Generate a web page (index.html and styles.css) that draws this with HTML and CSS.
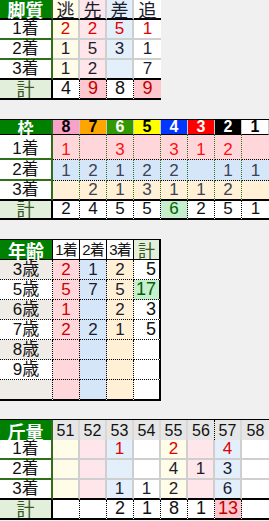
FILE: index.html
```html
<!DOCTYPE html>
<html lang="ja">
<head>
<meta charset="utf-8">
<link rel="stylesheet" href="styles.css">
</head>
<body>
<div class="t t1">
  <div class="c hl">脚質</div>
  <div class="c h y">逃</div><div class="c h p">先</div><div class="c h b">差</div><div class="c h w last">追</div>
  <div class="c lb">1着</div>
  <div class="c d y red">2</div><div class="c d p red">2</div><div class="c d b red">5</div><div class="c d w red last">1</div>
  <div class="c lb">2着</div>
  <div class="c d y">1</div><div class="c d p">5</div><div class="c d b">3</div><div class="c d w last">1</div>
  <div class="c lb rb">3着</div>
  <div class="c d y rb">1</div><div class="c d p rb">2</div><div class="c d b rb"></div><div class="c d w rb last">7</div>
  <div class="c tl">計</div>
  <div class="c s">4</div><div class="c s bad">9</div><div class="c s">8</div><div class="c s bad last">9</div>
</div>

<div class="t t2">
  <div class="c hl">枠</div>
  <div class="c h f8">8</div><div class="c h f7">7</div><div class="c h f6">6</div><div class="c h f5">5</div>
  <div class="c h f4">4</div><div class="c h f3">3</div><div class="c h f2">2</div><div class="c h f1">1</div>
  <div class="c lb">1着</div>
  <div class="c d r1">1</div><div class="c d r1"></div><div class="c d r1">3</div><div class="c d r1"></div>
  <div class="c d r1">3</div><div class="c d r1">1</div><div class="c d r1">2</div><div class="c d r1 last"></div>
  <div class="c lb">2着</div>
  <div class="c d r2">1</div><div class="c d r2">2</div><div class="c d r2">1</div><div class="c d r2">2</div>
  <div class="c d r2">2</div><div class="c d r2"></div><div class="c d r2">1</div><div class="c d r2 last">1</div>
  <div class="c lb rb">3着</div>
  <div class="c d r3"></div><div class="c d r3">2</div><div class="c d r3">1</div><div class="c d r3">3</div>
  <div class="c d r3">1</div><div class="c d r3">1</div><div class="c d r3">2</div><div class="c d r3 last"></div>
  <div class="c tl">計</div>
  <div class="c s">2</div><div class="c s">4</div><div class="c s">5</div><div class="c s">5</div>
  <div class="c s good">6</div><div class="c s">2</div><div class="c s">5</div><div class="c s last">1</div>
</div>

<div class="t t3">
  <div class="c hl">年齢</div>
  <div class="c h">1着</div><div class="c h">2着</div><div class="c h">3着</div><div class="c h ht last">計</div>
  <div class="c lb alt">3歳</div>
  <div class="c d k1">2</div><div class="c d k2">1</div><div class="c d k3">2</div><div class="c d k4 last">5</div>
  <div class="c lb">5歳</div>
  <div class="c d k1">5</div><div class="c d k2">7</div><div class="c d k3">5</div><div class="c d k4 good last">17</div>
  <div class="c lb alt">6歳</div>
  <div class="c d k1">1</div><div class="c d k2"></div><div class="c d k3">2</div><div class="c d k4 last">3</div>
  <div class="c lb">7歳</div>
  <div class="c d k1">2</div><div class="c d k2">2</div><div class="c d k3">1</div><div class="c d k4 last">5</div>
  <div class="c lb alt">8歳</div>
  <div class="c d k1"></div><div class="c d k2"></div><div class="c d k3"></div><div class="c d k4 last"></div>
  <div class="c lb">9歳</div>
  <div class="c d k1"></div><div class="c d k2"></div><div class="c d k3"></div><div class="c d k4 last"></div>
  <div class="c lb alt end"></div>
  <div class="c d k1 end"></div><div class="c d k2 end"></div><div class="c d k3 end"></div><div class="c d k4 end last"></div>
</div>

<div class="t t4">
  <div class="c hl">斤量</div>
  <div class="c h">51</div><div class="c h">52</div><div class="c h">53</div><div class="c h">54</div>
  <div class="c h">55</div><div class="c h dl">56</div><div class="c h">57</div><div class="c h last">58</div>
  <div class="c lb">1着</div>
  <div class="c d y"></div><div class="c d p"></div><div class="c d b red">1</div><div class="c d w"></div>
  <div class="c d y red">2</div><div class="c d p"></div><div class="c d b red">4</div><div class="c d w last"></div>
  <div class="c lb">2着</div>
  <div class="c d y"></div><div class="c d p"></div><div class="c d b"></div><div class="c d w"></div>
  <div class="c d y">4</div><div class="c d p">1</div><div class="c d b">3</div><div class="c d w last"></div>
  <div class="c lb rb">3着</div>
  <div class="c d y rb"></div><div class="c d p rb"></div><div class="c d b rb">1</div><div class="c d w rb">1</div>
  <div class="c d y rb">2</div><div class="c d p rb"></div><div class="c d b rb">6</div><div class="c d w rb last"></div>
  <div class="c tl">計</div>
  <div class="c s"></div><div class="c s"></div><div class="c s">2</div><div class="c s">1</div>
  <div class="c s">8</div><div class="c s">1</div><div class="c s bad">13</div><div class="c s last"></div>
</div>
</body>
</html>
```

FILE: styles.css
```css
html, body {
  margin: 0;
  padding: 0;
  background: #f0f0f0;
}
body {
  width: 269px;
  height: 521px;
  overflow: hidden;
  font-family: "Liberation Sans", "Noto Sans CJK JP", sans-serif;
  color: #1c1c30;
}
.t {
  display: grid;
  background: #fff;
  width: max-content;
}
.c {
  box-sizing: border-box;
  display: flex;
  align-items: flex-end;
  justify-content: center;
  white-space: nowrap;
  font-size: 17px;
  line-height: 17px;
  padding-bottom: 1px;
}

/* common pieces */
.hl {
  background: #008000;
  color: #fff;
  font-family: "Noto Sans CJK JP", sans-serif;
  font-weight: bold;
  font-size: 18px;
  line-height: 18px;
  padding-bottom: 0;
}
.lb {
  font-family: "Liberation Sans", "Noto Sans CJK JP", sans-serif;
  font-size: 17px;
  color: #111;
}
.tl {
  background: #e2efda;
  color: #375623;
  font-family: "Noto Sans CJK JP", sans-serif;
  font-size: 18px;
}
.red { color: #e00000; }
.y { background: #fffde8; }
.p { background: #ffe6ea; }
.b { background: #e3effb; }
.w { background: #fff; }
.s {
  background: #fff;
  color: #111;
  font-size: 18px;
  border-right: 1px dotted #000;
}
.bad { background: #ffc7ce; color: #c00000; }
.good { background: #c6efce; color: #006100; }

/* table 1 */
.t1 {
  grid-template-columns: 53px repeat(4, 27px);
  grid-auto-rows: 20px;
}
.t1 .c { border-right: 2px solid #cfcfcf; border-bottom: 2px solid #cfcfcf; }
.t1 .hl { border-right: 2px solid #2f6f1a; border-bottom: 2px solid #000; }
.t1 .h { border-bottom: 2px solid #000; font-family: "Noto Sans CJK JP", sans-serif; font-size: 18px; line-height: 18px; padding-bottom: 0; }
.t1 .lb { border-right: 2px solid #2f6f1a; border-bottom: 2px solid #2f6f1a; }
.t1 .rb { border-bottom: 2px solid #000; }
.t1 .tl { border-right: 2px solid #000; border-bottom: 2px solid #000; }
.t1 .s { border-right: 1px dotted #000; border-bottom: 2px solid #000; }
.t1 .last { border-right: none; }

/* table 2 */
.t2 {
  margin-top: 19px;
  border-top: 1px solid #000;
  grid-template-columns: 53px repeat(8, 27px);
  grid-template-rows: 15px 25px 21px 20px 19px;
}
.t2 .hl { border-right: 2px solid #2f6f1a; border-bottom: 1px solid #000; font-size: 16px; line-height: 14px; }
.t2 .h {
  border-right: 1px solid #c8c8c8;
  border-bottom: 1px solid #000;
  font-weight: bold;
  font-size: 16px;
  line-height: 14px;
  padding-bottom: 0;
}
.f8 { background: #f9a2c8; color: #000; }
.f7 { background: #ffa500; color: #000; }
.f6 { background: #339900; color: #fff; }
.f5 { background: #ffff00; color: #000; }
.f4 { background: #0036ff; color: #fff; }
.f3 { background: #ff0000; color: #fff; }
.f2 { background: #000; color: #fff; }
.f1 { background: #fff; color: #000; }
.t2 .lb { border-right: 2px solid #2f6f1a; border-bottom: 2px solid #2f6f1a; }
.t2 .lb.rb { border-bottom: 2px solid #000; }
.t2 .d { border-right: 1px dotted #2f6f1a; border-bottom: 1px dotted #000; color: #3c4356; }
.t2 .r1 { background: #ffd7db; color: #ff1010; }
.t2 .r2 { background: #d6e6f9; }
.t2 .r3 { background: #fff0d6; border-bottom: 2px solid #000; }
.t2 .tl { border-right: 2px solid #000; border-bottom: 2px solid #000; }
.t2 .s { border-bottom: 2px solid #000; font-size: 17px; }
.t2 .last { border-right: none; }

/* table 3 */
.t3 {
  margin-top: 19px;
  border-top: 1px solid #000;
  grid-template-columns: 53px repeat(4, 27px);
  grid-template-rows: repeat(7, 20px) 21px;
}
.t3 .hl { border-right: 1px solid #000; border-bottom: 1px solid #000; }
.t3 .h {
  background: #fff;
  color: #111;
  font-size: 15px;
  letter-spacing: -1px;
  border-right: 1px solid #000;
  border-bottom: 1px solid #000;
}
.t3 .ht { background: #e2efda; color: #375623; font-family: "Noto Sans CJK JP", sans-serif; font-size: 17px; letter-spacing: 0; }
.t3 .lb { background: #fff; border-right: 1px dotted #000; border-bottom: 1px dotted #000; }
.t3 .lb.alt { background: #efebe6; }
.t3 .d { border-right: 1px dotted #000; border-bottom: 1px dotted #000; }
.t3 .k1 { background: #ffd7db; color: #d00000; }
.t3 .k2 { background: #d6e6f9; }
.t3 .k3 { background: #fff0d6; }
.t3 .k4 { background: #fff; justify-content: flex-end; padding-right: 3px; font-size: 18px; color: #111; }
.t3 .k4.good { background: #c6efce; color: #006100; }
.t3 .last { border-right: 2px solid #000; }
.t3 .end { border-bottom: 2px solid #000; }

/* table 4 */
.t4 {
  margin-top: 18px;
  border-top: 1px solid #000;
  grid-template-columns: 53px repeat(8, 27px);
  grid-auto-rows: 20px;
}
.t4 .c { border-right: 2px solid #cfcfcf; border-bottom: 2px solid #cfcfcf; }
.t4 .hl { border-right: 2px solid #2f6f1a; border-bottom: none; }
.t4 .h { background: #e6e6e6; color: #111; font-size: 16px; border-right: 2px solid #d8d8d8; border-bottom: none; }
.t4 .h.dl { border-right: 1px dotted #000; }
.t4 .lb { border-right: 2px solid #2f6f1a; border-bottom: 2px solid #2f6f1a; }
.t4 .lb.rb, .t4 .rb { border-bottom: 2px solid #000; }
.t4 .tl { border-right: 2px solid #000; border-bottom: 2px solid #000; }
.t4 .s { border-right: 1px dotted #000; border-bottom: 2px solid #000; }
.t4 .last { border-right: none; }
```
